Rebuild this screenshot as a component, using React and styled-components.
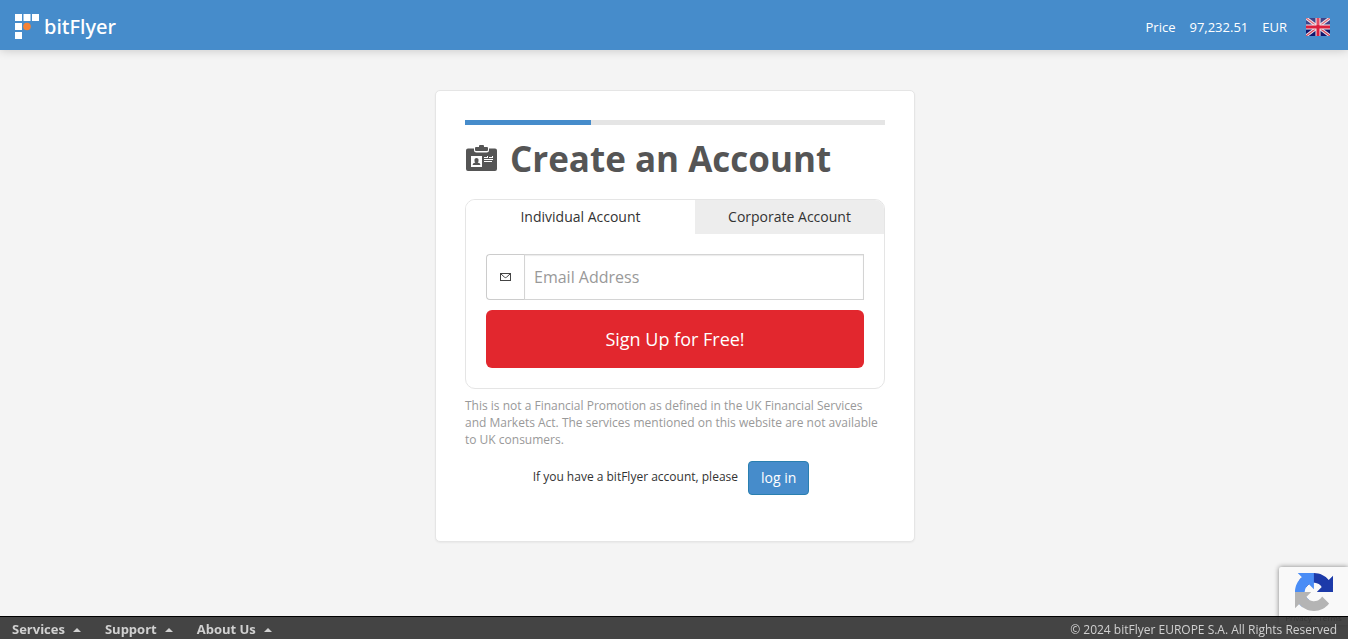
import React, { useState } from "react";
import styled, { createGlobalStyle } from "styled-components";

const GlobalStyle = createGlobalStyle`
  * {
    box-sizing: border-box;
  }
  body {
    margin: 0;
    background: #f4f4f4;
    color: #333;
    font-family: "Open Sans", "Liberation Sans", sans-serif;
    font-size: 14px;
    line-height: 20px;
  }
  button, input {
    font-family: inherit;
  }
`;

const Page = styled.div`
  display: flex;
  flex-direction: column;
  min-height: 100vh;
`;

const Header = styled.header`
  display: flex;
  align-items: center;
  justify-content: space-between;
  height: 50px;
  padding: 4px 18px 0 15px;
  background: #468ccb;
  box-shadow: 0 0 10px rgba(0, 0, 0, 0.2);
`;

const Brand = styled.a`
  display: flex;
  align-items: center;
  gap: 5px;
  color: #fff;
  font-family: "Noto Sans", "Open Sans", sans-serif;
  font-size: 20px;
  font-weight: 500;
  line-height: 24px;
  text-decoration: none;
`;

const Ticker = styled.div`
  display: flex;
  align-items: center;
  gap: 14px;
  color: #fff;
  font-size: 13px;
`;

const LangButton = styled.button`
  display: flex;
  margin-left: 5px;
  padding: 0;
  border: 0;
  background: none;
`;

const Main = styled.main`
  flex: 1;
  padding: 40px 14px 40px 16px;
`;

const Card = styled.section`
  max-width: 480px;
  margin: 0 auto;
  padding: 29px 29px 46px;
  border: 1px solid #e5e5e5;
  border-radius: 5px;
  background: #fff;
  box-shadow: 0 1px 2px rgba(0, 0, 0, 0.05);
`;

const Progress = styled.div`
  height: 5px;
  background: #e5e5e5;
`;

const ProgressFill = styled.div`
  width: ${(props) => props.$percent}%;
  height: 100%;
  background: #468ccb;
`;

const Title = styled.h1`
  display: flex;
  align-items: center;
  gap: 12px;
  margin: 14px 0 20px;
  color: #555;
  font-size: 35px;
  font-weight: 700;
  line-height: 40px;
`;

const Panel = styled.div`
  border: 1px solid #e5e5e5;
  border-radius: 10px;
  overflow: hidden;
`;

const Tabs = styled.div`
  display: grid;
  grid-template-columns: 229fr 189fr;
`;

const Tab = styled.button`
  height: 34px;
  padding: 0;
  border: 0;
  background: ${(props) => (props.$active ? "#fff" : "#ededed")};
  color: #333;
  font-size: 14px;
  line-height: 20px;
`;

const Form = styled.form`
  display: flex;
  flex-direction: column;
  gap: 10px;
  padding: 20px;
`;

const InputGroup = styled.div`
  display: flex;
  height: 46px;
`;

const InputIcon = styled.label`
  display: flex;
  align-items: center;
  justify-content: center;
  width: 38px;
  border: 1px solid #ccc;
  border-right: 0;
  border-radius: 4px 0 0 4px;
`;

const EmailInput = styled.input`
  flex: 1;
  min-width: 0;
  padding: 0 9px;
  border: 1px solid #d4d4d4;
  border-radius: 0;
  background: #fff;
  box-shadow: inset 0 1px 1px rgba(0, 0, 0, 0.08);
  font-size: 16px;
  &::placeholder {
    color: #999;
  }
`;

const SignUpButton = styled.button`
  height: 58px;
  border: 0;
  border-radius: 6px;
  background: #e2272e;
  color: #fff;
  font-size: 18px;
`;

const Notice = styled.p`
  margin: 8px 0 13px;
  color: #999;
  font-size: 12px;
  line-height: 17px;
`;

const LoginRow = styled.div`
  display: flex;
  align-items: center;
  justify-content: center;
  gap: 10px;
  padding-right: 8px;
`;

const LoginHint = styled.span`
  padding-bottom: 2px;
  font-size: 12px;
`;

const LoginLink = styled.a`
  padding: 6px 12px;
  border: 1px solid #2a7fb0;
  border-radius: 4px;
  background: #468ccb;
  color: #fff;
  font-size: 14px;
  text-decoration: none;
`;

const Footer = styled.footer`
  position: relative;
  z-index: 2;
  display: flex;
  align-items: baseline;
  justify-content: space-between;
  height: 23px;
  padding: 2px 11px 0 12px;
  border-top: 1px solid #000;
  background: rgba(51, 51, 51, 0.91);
  color: #d0d0d0;
  font-size: 12px;
`;

const FooterNav = styled.nav`
  display: flex;
  gap: 24px;
`;

const FooterButton = styled.button`
  display: flex;
  align-items: center;
  gap: 8px;
  padding: 0;
  border: 0;
  background: none;
  color: #d0d0d0;
  font-size: 13px;
  font-weight: 700;
  line-height: 20px;
`;

const Caret = styled.span`
  margin-top: 2px;
  border-right: 4px solid transparent;
  border-bottom: 4px solid #d0d0d0;
  border-left: 4px solid transparent;
`;

const CaptchaBadge = styled.aside`
  position: fixed;
  right: 0;
  bottom: 14px;
  z-index: 1;
  display: flex;
  flex-direction: column;
  align-items: center;
  gap: 2px;
  width: 69px;
  height: 58px;
  padding-top: 6px;
  border-radius: 2px 0 0 2px;
  background: #f9f9f9;
  box-shadow: 0 0 5px gray;
  color: #555;
  font-size: 8px;
  line-height: 10px;
`;

const Logo = () => (
  <svg width="24" height="26" viewBox="0 0 24 26" aria-hidden="true">
    <g fill="#fff">
      <rect x="0" y="0" width="7" height="7" />
      <rect x="8.500" y="0" width="7" height="7" />
      <rect x="17" y="0" width="7" height="7" />
      <rect x="0" y="9" width="7" height="7" />
      <rect x="0" y="18" width="7" height="7" />
    </g>
    <circle cx="12" cy="12.500" r="3.800" fill="#f58235" />
  </svg>
);

const Flag = () => (
  <svg width="24" height="18" viewBox="0 0 24 18" role="img" aria-label="English">
    <rect width="24" height="18" fill="#11146c" />
    <path d="M0 0L24 18M24 0L0 18" stroke="#e8e0e8" strokeWidth="3.200" />
    <path d="M0 0L24 18M24 0L0 18" stroke="#d84558" strokeWidth="1.200" />
    <path d="M12 0V18M0 9H24" stroke="#f3e6ea" strokeWidth="5" />
    <path d="M12 0V18M0 9H24" stroke="#dc1f3c" strokeWidth="3" />
    <rect width="24" height="7" fill="#fff" opacity="0.200" />
  </svg>
);

const IdCard = () => (
  <svg width="33" height="30" viewBox="0 0 33 30" aria-hidden="true">
    <path
      fill="#555"
      d="M3 4.500h6V6Q9 8.500 11.500 8.500h10Q24 8.500 24 6V4.500h6q2 0 2 2V25q0 2-2 2H3q-2 0-2-2V6.500q0-2 2-2z"
    />
    <path fill="#555" d="M11 3h3V2q0-1 1-1h3q1 0 1 1v1h3q1 0 1 1v2q0 1-1 1H11q-1 0-1-1V4q0-1 1-1z" />
    <path fill="#fff" d="M6 12h11v11H6z" />
    <path fill="#555" d="M9.500 15.500q0-1.500 2-1.500t2 1.500v1.500q0 1-.9 1.500 2.700.4 2.900 2.500h-8q.2-2.100 2.900-2.500-.9-.5-.9-1.500z" />
    <path stroke="#fff" d="M19 13.500h4M24 13.500h4M19 15.500h9M19 17.500h8" />
    <path stroke="#fff" d="M22.500 12v1.500M27.500 12v1.500" />
  </svg>
);

const Envelope = () => (
  <svg width="13" height="10" viewBox="0 0 13 10" fill="none" stroke="#444" aria-hidden="true">
    <rect x="1.500" y="1.500" width="10" height="7" />
    <path d="M2 2L5.500 5.200Q6.500 6 7.500 5.200L11 2" />
  </svg>
);

const CaptchaLogo = () => (
  <svg width="38" height="38" viewBox="0 0 64 64" aria-hidden="true">
    <path
      fill="#1c3aa9"
      d="M64 31.955l-.033-1.370V4.687l-7.160 7.160C50.948 4.674 42.033.093 32.050.093c-10.390 0-19.622 4.960-25.458 12.640l11.736 11.860a15.550 15.550 0 0 1 4.754-5.334c2.050-1.600 4.952-2.906 8.968-2.906.485 0 .860.057 1.135.163 4.976.393 9.288 3.140 11.828 7.124l-8.307 8.307z"
    />
    <path
      fill="#4a8df6"
      d="M31.862.094l-1.370.033H4.594l7.160 7.160C4.581 13.146 0 22.060 0 32.044c0 10.390 4.960 19.622 12.640 25.458l11.860-11.736a15.550 15.550 0 0 1-5.334-4.754c-1.600-2.050-2.906-4.952-2.906-8.968 0-.485.057-.860.163-1.135.393-4.976 3.140-9.288 7.124-11.828l8.307 8.307z"
    />
    <path
      fill="#b4b4b4"
      d="M.001 32.045l.033 1.370v25.898l7.160-7.160c5.860 7.173 14.774 11.754 24.757 11.754 10.390 0 19.622-4.960 25.458-12.640L45.673 39.407a15.550 15.550 0 0 1-4.754 5.334c-2.050 1.600-4.952 2.906-8.968 2.906-.485 0-.860-.057-1.135-.163-4.976-.393-9.288-3.140-11.828-7.124l8.307-8.307z"
    />
  </svg>
);

const footerMenus = ["Services", "Support", "About Us"];
const accountTypes = ["Individual Account", "Corporate Account"];

const App = () => {
  const [accountType, setAccountType] = useState(accountTypes[0]);

  return (
    <Page>
      <GlobalStyle />
      <Header>
        <Brand href="#">
          <Logo />
          bitFlyer
        </Brand>
        <Ticker>
          <span>Price</span>
          <span>97,232.51</span>
          <span>EUR</span>
          <LangButton type="button">
            <Flag />
          </LangButton>
        </Ticker>
      </Header>
      <Main>
        <Card>
          <Progress>
            <ProgressFill $percent={30} />
          </Progress>
          <Title>
            <IdCard />
            Create an Account
          </Title>
          <Panel>
            <Tabs>
              {accountTypes.map((type) => (
                <Tab
                  key={type}
                  type="button"
                  $active={type === accountType}
                  onClick={() => setAccountType(type)}
                >
                  {type}
                </Tab>
              ))}
            </Tabs>
            <Form onSubmit={(e) => e.preventDefault()}>
              <InputGroup>
                <InputIcon htmlFor="email">
                  <Envelope />
                </InputIcon>
                <EmailInput id="email" type="email" placeholder="Email Address" aria-label="Email Address" />
              </InputGroup>
              <SignUpButton type="submit">Sign Up for Free!</SignUpButton>
            </Form>
          </Panel>
          <Notice>
            This is not a Financial Promotion as defined in the UK Financial Services and Markets Act.
            The services mentioned on this website are not available to UK consumers.
          </Notice>
          <LoginRow>
            <LoginHint>If you have a bitFlyer account, please</LoginHint>
            <LoginLink href="#">log in</LoginLink>
          </LoginRow>
        </Card>
      </Main>
      <Footer>
        <FooterNav>
          {footerMenus.map((menu) => (
            <FooterButton key={menu} type="button">
              {menu}
              <Caret />
            </FooterButton>
          ))}
        </FooterNav>
        <span>© 2024 bitFlyer EUROPE S.A. All Rights Reserved</span>
      </Footer>
      <CaptchaBadge>
        <CaptchaLogo />
        <span>Privacy - Terms</span>
      </CaptchaBadge>
    </Page>
  );
};

export default App;
